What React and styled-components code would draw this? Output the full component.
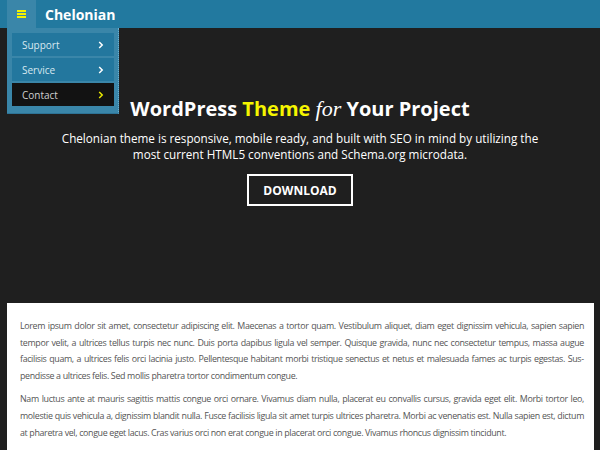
import React from 'react';
import styled, { createGlobalStyle } from 'styled-components';

const GlobalStyle = createGlobalStyle`
    html, body {
        margin: 0;
        padding: 0;
        background: #1f1f1f;
        font-family: "Open Sans", "Liberation Sans", sans-serif;
    }
`;

const menuItems = [
    { label: 'Support', active: false },
    { label: 'Service', active: false },
    { label: 'Contact', active: true },
];

const App = () => {
    return (
        <Page>
            <GlobalStyle />
            <Header>
                <Toggle>
                    <Burger>
                        <span />
                        <span />
                        <span />
                    </Burger>
                    <Dropdown>
                        {menuItems.map(item => (
                            <MenuItem key={item.label} $active={item.active}>
                                {item.label}
                                <Chevron $active={item.active} viewBox="0 0 6 8">
                                    <path d="M1.2 1 L4.2 4 L1.2 7" />
                                </Chevron>
                            </MenuItem>
                        ))}
                    </Dropdown>
                </Toggle>
                <Brand>Chelonian</Brand>
            </Header>
            <Hero>
                <Title>
                    WordPress <Accent>Theme</Accent> <For>for</For> Your Project
                </Title>
                <Lead>
                    Chelonian theme is responsive, mobile ready, and built with SEO in mind by utilizing the
                    most current HTML5 conventions and Schema.org microdata.
                </Lead>
                <DownloadButton>DOWNLOAD</DownloadButton>
            </Hero>
            <Content lang="en">
                <p>
                    Lorem ipsum dolor sit amet, consectetur adipiscing elit. Maecenas a tortor quam. Vestibulum aliquet, diam eget dignissim vehicula, sapien sapien tempor velit, a ultrices tellus turpis nec nunc. Duis porta dapibus ligula vel semper. Quisque gravida, nunc nec consectetur tempus, massa augue facilisis quam, a ultrices felis orci lacinia justo. Pellentesque habitant morbi tristique senectus et netus et malesuada fames ac turpis egestas. Sus{'\u00AD'}pendisse a ultrices felis. Sed mollis pharetra tortor condimentum congue.
                </p>
                <p>
                    Nam luctus ante at mauris sagittis mattis congue orci ornare. Vivamus diam nulla, placerat eu convallis cursus, gravida eget elit. Morbi tortor leo, molestie quis vehicula a, dignissim blandit nulla. Fusce facilisis ligula sit amet turpis ultrices pharetra. Morbi ac venenatis est. Nulla sapien est, dic{'\u00AD'}tum at pharetra vel, congue eget lacus. Cras varius orci non erat congue in placerat orci congue. Vivamus rhoncus dignissim tincidunt.
                </p>
            </Content>
        </Page>
    );
};

const Page = styled.div`
    width: 600px;
    height: 450px;
    overflow: hidden;
    background: #1f1f1f;
`;

const Header = styled.header`
    position: relative;
    z-index: 2;
    height: 28px;
    padding-left: 7px;
    display: flex;
    align-items: center;
    background: #22799f;
`;

const Toggle = styled.div`
    position: relative;
    width: 29px;
    height: 28px;
    display: flex;
    align-items: center;
    justify-content: center;
    background: #3a86a9;
`;

const Burger = styled.div`
    display: flex;
    flex-direction: column;
    gap: 1px;
    margin-left: -1px;

    span {
        display: block;
        width: 9px;
        height: 2px;
        background: #f2f200;
    }
`;

const Dropdown = styled.nav`
    position: absolute;
    top: 28px;
    left: 0;
    width: 102px;
    padding: 5px 4px 7px 5px;
    display: flex;
    flex-direction: column;
    gap: 2px;
    background: #3a86a9;
    border-right: 1px dotted #6fb0cf;
    border-bottom: 1px solid #2d7396;
`;

const MenuItem = styled.a`
    height: 23px;
    padding: 0 10px 0 10px;
    display: flex;
    align-items: center;
    justify-content: space-between;
    font-size: 10px;
    color: ${p => (p.$active ? '#d0d0d0' : '#d8e8f0')};
    background: ${p => (p.$active ? '#121212' : '#23779e')};
`;

const Chevron = styled.svg`
    width: 6px;
    height: 8px;
    fill: none;
    stroke: ${p => (p.$active ? '#e8e800' : '#ffffff')};
    stroke-width: 1.5;
`;

const Brand = styled.div`
    margin-left: 9px;
    font-size: 14px;
    font-weight: 700;
    color: #ffffff;
`;

const Hero = styled.section`
    height: 275px;
    padding-top: 67px;
    box-sizing: border-box;
    display: flex;
    flex-direction: column;
    align-items: center;
    text-align: center;
    color: #ffffff;
`;

const Title = styled.h1`
    margin: 0;
    font-size: 20px;
    line-height: 28px;
    font-weight: 700;
`;

const Accent = styled.span`
    color: #f5f500;
`;

const For = styled.span`
    font-family: "Liberation Serif", serif;
    font-style: italic;
    font-weight: 400;
    font-size: 22px;
`;

const Lead = styled.p`
    margin: 7px 0 0;
    width: 490px;
    font-size: 11.7px;
    line-height: 16px;
`;

const DownloadButton = styled.a`
    margin-top: 12px;
    width: 102px;
    height: 28px;
    display: flex;
    align-items: center;
    justify-content: center;
    border: 2px solid #ffffff;
    font-size: 12px;
    font-weight: 700;
    color: #ffffff;
`;

const Content = styled.main`
    margin: 0 6px 0 7px;
    padding: 15px 10px 20px 13px;
    background: #ffffff;
    color: #555555;
    font-size: 8.9px;
    letter-spacing: -0.35px;
    line-height: 16.6px;
    text-align: justify;

    p {
        margin: 0 0 7px;
    }
`;

export default App;
